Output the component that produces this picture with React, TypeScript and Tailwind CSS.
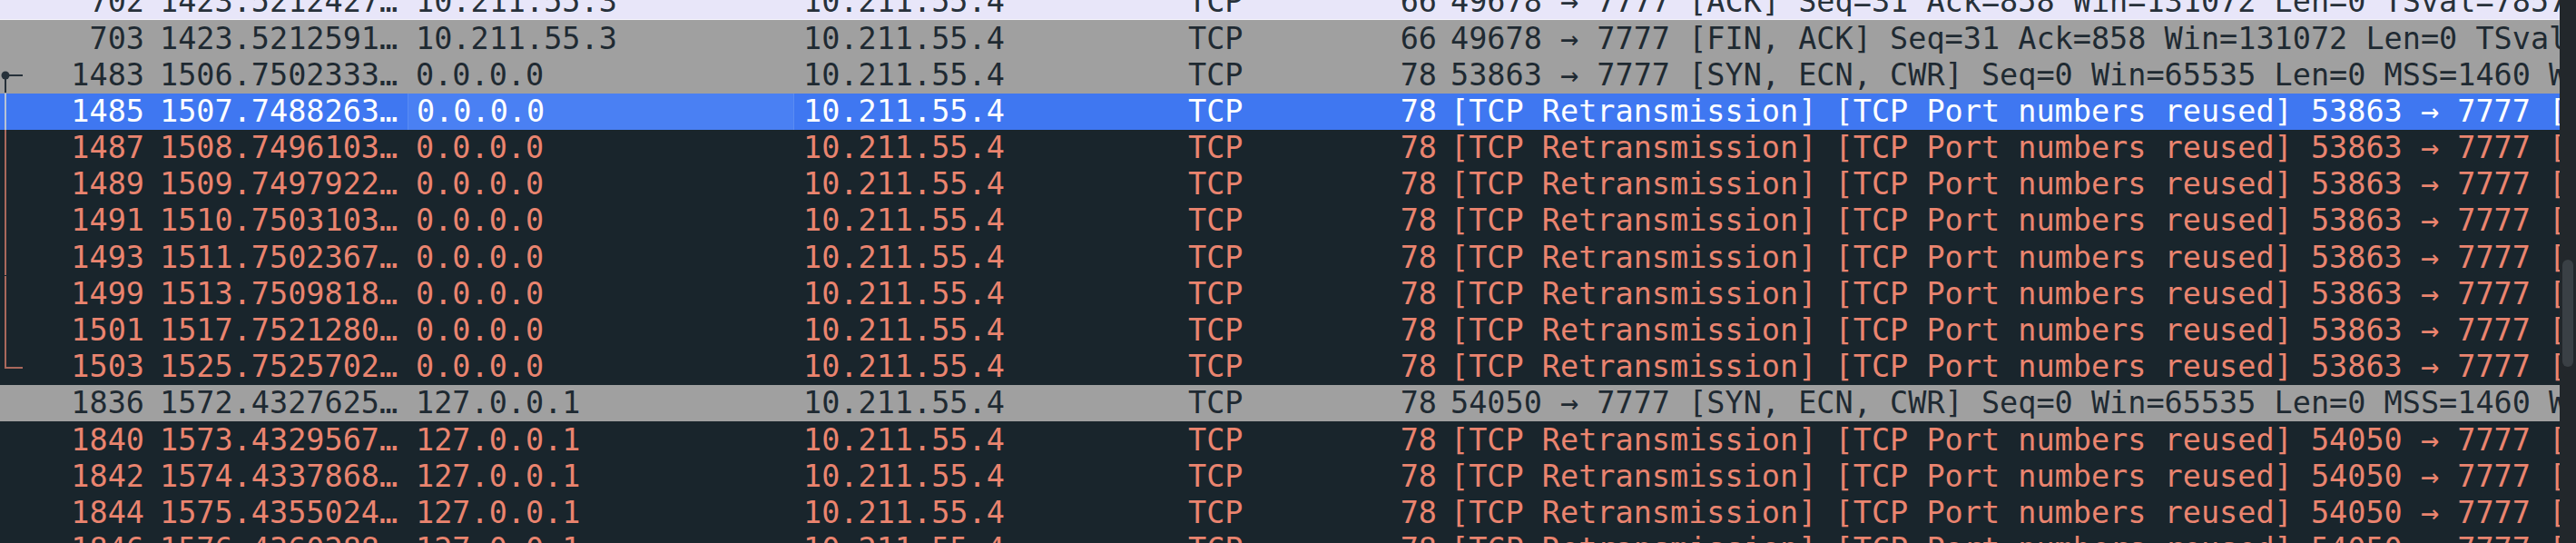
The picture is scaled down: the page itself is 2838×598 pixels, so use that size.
import React from "react";

type Kind = "light" | "gray" | "selected" | "dark";
type Tree = "start" | "mid" | "end" | null;

type Row = {
  no: string;
  time: string;
  src: string;
  dst: string;
  len: string;
  info: string;
  kind: Kind;
  tree: Tree;
};

const retrans = (port: string) =>
  `[TCP Retransmission] [TCP Port numbers reused] ${port} → 7777 [SYN, ECN, CWR] Seq=0 Win=65535 Len=0 MSS=1460`;

const rows: Row[] = [
  { no: "702", time: "1423.5212427…", src: "10.211.55.3", dst: "10.211.55.4", len: "66", info: "49678 → 7777 [ACK] Seq=31 Ack=858 Win=131072 Len=0 TSval=785714331 TSecr=3291", kind: "light", tree: null },
  { no: "703", time: "1423.5212591…", src: "10.211.55.3", dst: "10.211.55.4", len: "66", info: "49678 → 7777 [FIN, ACK] Seq=31 Ack=858 Win=131072 Len=0 TSval=785714331", kind: "gray", tree: null },
  { no: "1483", time: "1506.7502333…", src: "0.0.0.0", dst: "10.211.55.4", len: "78", info: "53863 → 7777 [SYN, ECN, CWR] Seq=0 Win=65535 Len=0 MSS=1460 WS=64 TSval=0", kind: "gray", tree: "start" },
  { no: "1485", time: "1507.7488263…", src: "0.0.0.0", dst: "10.211.55.4", len: "78", info: retrans("53863"), kind: "selected", tree: "mid" },
  { no: "1487", time: "1508.7496103…", src: "0.0.0.0", dst: "10.211.55.4", len: "78", info: retrans("53863"), kind: "dark", tree: "mid" },
  { no: "1489", time: "1509.7497922…", src: "0.0.0.0", dst: "10.211.55.4", len: "78", info: retrans("53863"), kind: "dark", tree: "mid" },
  { no: "1491", time: "1510.7503103…", src: "0.0.0.0", dst: "10.211.55.4", len: "78", info: retrans("53863"), kind: "dark", tree: "mid" },
  { no: "1493", time: "1511.7502367…", src: "0.0.0.0", dst: "10.211.55.4", len: "78", info: retrans("53863"), kind: "dark", tree: "mid" },
  { no: "1499", time: "1513.7509818…", src: "0.0.0.0", dst: "10.211.55.4", len: "78", info: retrans("53863"), kind: "dark", tree: "mid" },
  { no: "1501", time: "1517.7521280…", src: "0.0.0.0", dst: "10.211.55.4", len: "78", info: retrans("53863"), kind: "dark", tree: "mid" },
  { no: "1503", time: "1525.7525702…", src: "0.0.0.0", dst: "10.211.55.4", len: "78", info: retrans("53863"), kind: "dark", tree: "end" },
  { no: "1836", time: "1572.4327625…", src: "127.0.0.1", dst: "10.211.55.4", len: "78", info: "54050 → 7777 [SYN, ECN, CWR] Seq=0 Win=65535 Len=0 MSS=1460 WS=64 TSval=0", kind: "gray", tree: null },
  { no: "1840", time: "1573.4329567…", src: "127.0.0.1", dst: "10.211.55.4", len: "78", info: retrans("54050"), kind: "dark", tree: null },
  { no: "1842", time: "1574.4337868…", src: "127.0.0.1", dst: "10.211.55.4", len: "78", info: retrans("54050"), kind: "dark", tree: null },
  { no: "1844", time: "1575.4355024…", src: "127.0.0.1", dst: "10.211.55.4", len: "78", info: retrans("54050"), kind: "dark", tree: null },
  { no: "1846", time: "1576.4360288…", src: "127.0.0.1", dst: "10.211.55.4", len: "78", info: retrans("54050"), kind: "dark", tree: null },
];

const rowStyles: Record<Kind, string> = {
  light: "bg-[#e8e6f9] text-[#27313a] border-b border-[#f4f3fb]",
  gray: "bg-[#a0a0a0] text-[#1f2a32]",
  selected: "bg-[#3f77f1] text-white",
  dark: "bg-[#19252c] text-[#ea846f]",
};

const treeColor: Record<Kind, string> = {
  light: "#27313a",
  gray: "#26313a",
  selected: "#b7c3d6",
  dark: "#a9685c",
};

const TreeMark = ({ tree, kind }: { tree: Tree; kind: Kind }) => {
  const c = treeColor[kind];
  return (
    <svg width="30" height="40" viewBox="0 0 30 40" className="shrink-0">
      {tree === "start" && (
        <>
          <line x1="6" y1="21" x2="6" y2="40" stroke={c} strokeWidth="2" />
          <line x1="6" y1="21" x2="25" y2="21" stroke={c} strokeWidth="2" />
          <circle cx="6" cy="21" r="4.5" fill={c} />
        </>
      )}
      {tree === "mid" && <line x1="6" y1="0" x2="6" y2="40" stroke={c} strokeWidth="2" />}
      {tree === "end" && (
        <>
          <line x1="6" y1="0" x2="6" y2="21" stroke={c} strokeWidth="2" />
          <line x1="5" y1="21" x2="25" y2="21" stroke={c} strokeWidth="2" />
        </>
      )}
    </svg>
  );
};

const PacketRow = ({ row }: { row: Row }) => (
  <div className={`flex h-[40.2px] shrink-0 items-center whitespace-nowrap ${rowStyles[row.kind]}`}>
    <div className="flex h-full w-[160px] shrink-0 items-center">
      <TreeMark tree={row.tree} kind={row.kind} />
      <span className="flex-1 pr-[1px] text-right">{row.no}</span>
    </div>
    <div className="w-[289px] shrink-0 pl-[16px]">{row.time}</div>
    <div
      className={`flex h-full w-[426px] shrink-0 items-center pl-[9px] ${
        row.kind === "selected" ? "bg-[#4a80f3] border-x border-[#5a8cf2]" : ""
      }`}
    >
      {row.src}
    </div>
    <div className="w-[425px] shrink-0 pl-[10px]">{row.dst}</div>
    <div className="w-[240px] shrink-0 pl-[9px]">TCP</div>
    <div className="w-[56px] shrink-0 pr-[13px] text-right">{row.len}</div>
    <div className="min-w-0 flex-1 overflow-hidden pl-[2px]">{row.info}</div>
  </div>
);

export default function App() {
  return (
    <div
      className="flex h-[598px] w-[2838px] overflow-hidden bg-[#19252c] text-[33.5px] leading-none"
      style={{ fontFamily: '"DejaVu Sans Mono", "Liberation Mono", monospace' }}
    >
      <div className="min-w-0 flex-1 overflow-hidden">
        <div className="-mt-[18px] flex flex-col">
          {rows.map((r) => (
            <PacketRow key={r.no} row={r} />
          ))}
        </div>
      </div>
      <div className="flex w-[18px] shrink-0 flex-col items-center bg-[#22272b] pt-[286px]">
        <div className="h-[118px] w-[12px] rounded-full bg-[#3a4045]" />
      </div>
    </div>
  );
}
